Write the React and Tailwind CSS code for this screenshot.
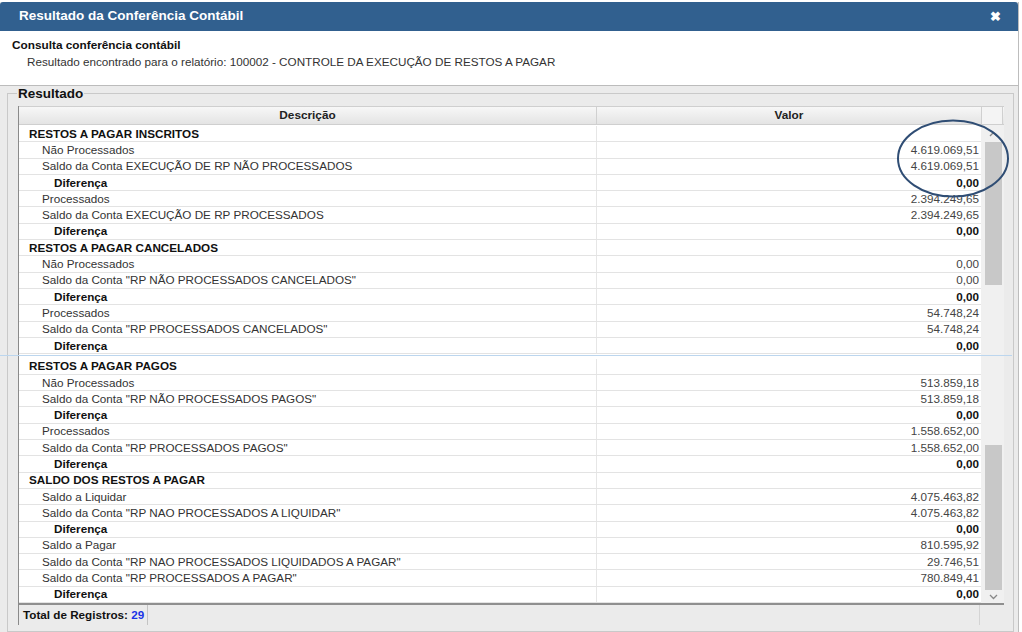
import React from 'react';

// linhas do relatório de conferência
const rows = [
  { t: 'h', d: 'RESTOS A PAGAR INSCRITOS' },
  { t: 's', d: 'Não Processados', v: '4.619.069,51' },
  { t: 's', d: 'Saldo da Conta EXECUÇÃO DE RP NÃO PROCESSADOS', v: '4.619.069,51' },
  { t: 'd', d: 'Diferença', v: '0,00' },
  { t: 's', d: 'Processados', v: '2.394.249,65' },
  { t: 's', d: 'Saldo da Conta EXECUÇÃO DE RP PROCESSADOS', v: '2.394.249,65' },
  { t: 'd', d: 'Diferença', v: '0,00' },
  { t: 'h', d: 'RESTOS A PAGAR CANCELADOS' },
  { t: 's', d: 'Não Processados', v: '0,00' },
  { t: 's', d: 'Saldo da Conta "RP NÃO PROCESSADOS CANCELADOS"', v: '0,00' },
  { t: 'd', d: 'Diferença', v: '0,00' },
  { t: 's', d: 'Processados', v: '54.748,24' },
  { t: 's', d: 'Saldo da Conta "RP PROCESSADOS CANCELADOS"', v: '54.748,24' },
  { t: 'd', d: 'Diferença', v: '0,00' },
  { t: 'gap' },
  { t: 'h', d: 'RESTOS A PAGAR PAGOS' },
  { t: 's', d: 'Não Processados', v: '513.859,18' },
  { t: 's', d: 'Saldo da Conta "RP NÃO PROCESSADOS PAGOS"', v: '513.859,18' },
  { t: 'd', d: 'Diferença', v: '0,00' },
  { t: 's', d: 'Processados', v: '1.558.652,00' },
  { t: 's', d: 'Saldo da Conta "RP PROCESSADOS PAGOS"', v: '1.558.652,00' },
  { t: 'd', d: 'Diferença', v: '0,00' },
  { t: 'h', d: 'SALDO DOS RESTOS A PAGAR' },
  { t: 's', d: 'Saldo a Liquidar', v: '4.075.463,82' },
  { t: 's', d: 'Saldo da Conta "RP NAO PROCESSADOS A LIQUIDAR"', v: '4.075.463,82' },
  { t: 'd', d: 'Diferença', v: '0,00' },
  { t: 's', d: 'Saldo a Pagar', v: '810.595,92' },
  { t: 's', d: 'Saldo da Conta "RP NAO PROCESSADOS LIQUIDADOS A PAGAR"', v: '29.746,51' },
  { t: 's', d: 'Saldo da Conta "RP PROCESSADOS A PAGAR"', v: '780.849,41' },
  { t: 'd', d: 'Diferença', v: '0,00' },
];

function Row({ r }) {
  if (r.t === 'gap') return <div className="h-[5px] bg-white" />;
  const descCls =
    r.t === 'h'
      ? 'pl-[10px] font-bold text-[#111]'
      : r.t === 'd'
      ? 'pl-[35px] font-bold text-[#111]'
      : 'pl-[23px] text-[#333]';
  return (
    <div className="flex h-[16.3px] items-center border-b border-[#e3e3e3] bg-white text-[11.7px] leading-[16px]">
      <div className={`w-[577px] whitespace-nowrap ${descCls}`}>{r.d}</div>
      <div
        className={`w-[385px] h-full flex items-center justify-end pr-[2px] border-l border-[#e6e6e6] ${
          r.t === 'd' ? 'font-bold text-[#111]' : 'text-[#444]'
        }`}
      >
        {r.v || ''}
      </div>
    </div>
  );
}

export default function App() {
  return (
    <div className="relative w-[1022px] h-[632px] overflow-hidden bg-white font-['Liberation_Sans',Arial,sans-serif]">
      <div className="h-[2px] bg-white" />
      <div className="w-[1019px] h-[630px] flex flex-col border-r border-[#bdbdbd] bg-[#ebebeb]">
        {/* barra de título */}
        <div className="h-[29px] shrink-0 bg-[#31608f] rounded-t-[3px] flex items-center justify-between pl-[19px] pr-[17px]">
          <span className="text-white text-[13.5px] font-bold">Resultado da Conferência Contábil</span>
          <span className="text-white text-[13px] font-bold leading-none">✖</span>
        </div>

        {/* cabeçalho da consulta */}
        <div className="h-[55px] shrink-0 bg-white border-b border-[#bcbcbc] pl-[12px] pt-[6px]">
          <div className="text-[11.8px] font-bold text-[#111] leading-[16px]">Consulta conferência contábil</div>
          <div className="text-[11.7px] text-[#333] leading-[16px] pl-[15px] pt-[1px]">
            Resultado encontrado para o relatório: 100002 - CONTROLE DA EXECUÇÃO DE RESTOS A PAGAR
          </div>
        </div>

        {/* fieldset resultado */}
        <div className="flex-1 pl-[7px] pr-[6px]">
          <fieldset className="h-full border border-[#c9c9c9] pl-[10px] pr-[9px]">
            <legend className="ml-[-1px] px-[1px] text-[13.5px] font-bold text-[#111] leading-[15px]">Resultado</legend>
            <div className="mt-[5px] w-[986px] border-l border-[#8a8a8a] bg-white">
              {/* cabeçalho da tabela */}
              <div className="flex h-[19px] border-t border-b border-[#cfcfcf] bg-gradient-to-b from-[#f7f7f7] to-[#e4e4e4] text-[11.8px] font-bold text-[#222]">
                <div className="w-[577px] flex items-center justify-center">Descrição</div>
                <div className="w-[385px] flex items-center justify-center border-l border-[#d0d0d0]">Valor</div>
                <div className="w-[22px] border-l border-[#d0d0d0] border-r bg-[#f4f4f4]" />
              </div>

              {/* corpo */}
              <div className="flex h-[478px]">
                <div className="w-[962px] flex flex-col pt-[1px]">
                  {rows.map((r, i) => (
                    <Row key={i} r={r} />
                  ))}
                </div>
                <div className="w-[24px] flex flex-col bg-[#f0f0f0] pl-[4px]">
                  <div className="h-[17px] flex items-center justify-center pr-[2px]">
                    <svg width="9" height="6" viewBox="0 0 9 6">
                      <path d="M1 5 L4.5 1.5 L8 5" fill="none" stroke="#888" strokeWidth="1.3" />
                    </svg>
                  </div>
                  <div className="h-[143px] w-[17px] bg-[#c8c8c8]" />
                  <div className="h-[160px]" />
                  <div className="h-[145px] w-[17px] bg-[#c8c8c8]" />
                  <div className="h-[13px] flex items-center justify-center pr-[2px]">
                    <svg width="9" height="6" viewBox="0 0 9 6">
                      <path d="M1 1 L4.5 4.5 L8 1" fill="none" stroke="#888" strokeWidth="1.3" />
                    </svg>
                  </div>
                </div>
              </div>

              {/* rodapé */}
              <div className="flex h-[22px] border-t-2 border-[#8f8f8f] bg-[#ebebeb] text-[11.7px] font-bold text-[#111]">
                <div className="flex items-center pl-[4px] pr-[3px] border-r border-[#c4c4c4]">
                  Total de Registros:&nbsp;<span className="text-[#1a33e6]">29</span>
                </div>
                <div className="flex-1" />
                <div className="w-[25px] border-l border-[#d4d4d4]" />
              </div>
            </div>
          </fieldset>
        </div>
      </div>

      {/* emenda da captura */}
      <div className="absolute left-0 top-[355px] w-[1012px] h-px bg-[#bcd6ee]" />

      {/* marcação em elipse */}
      <svg className="absolute left-[895px] top-[118px] pointer-events-none" width="116" height="81" viewBox="0 0 116 81">
        <ellipse cx="58" cy="40.5" rx="55" ry="38" fill="none" stroke="#2f4d74" strokeWidth="2" />
      </svg>
    </div>
  );
}
